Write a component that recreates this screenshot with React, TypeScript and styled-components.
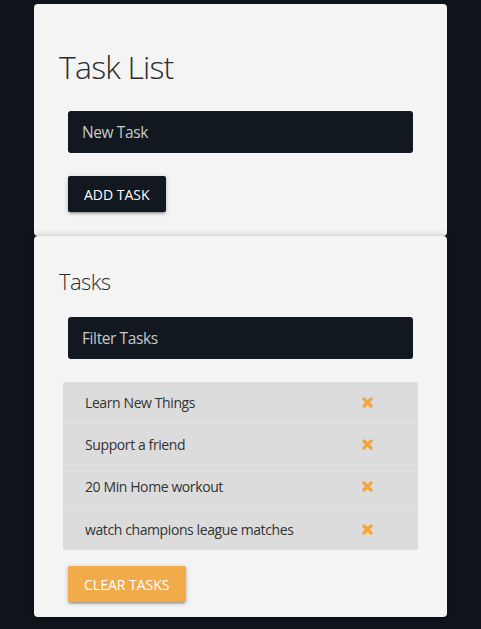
import React from "react";
import styled, { createGlobalStyle } from "styled-components";

const Global = createGlobalStyle`
  html, body { margin: 0; padding: 0; background: #0e141a; }
  body { font-family: "Open Sans", "Noto Sans", sans-serif; color: #333; }
  * { box-sizing: border-box; }
`;

const Page = styled.div`
  min-height: 629px;
  padding: 4px 0 0 34px;
`;

const Column = styled.div`
  width: 413px;
  display: flex;
  flex-direction: column;
`;

const Card = styled.section<{ $top: number; $bottom: number; $raised?: boolean }>`
  background: #f4f4f4;
  border-radius: 4px;
  padding: ${(p) => p.$top}px 0 ${(p) => p.$bottom}px 0;
  position: relative;
  box-shadow: ${(p) =>
    p.$raised ? "0 -2px 6px rgba(0,0,0,0.12), 0 1px 3px rgba(0,0,0,0.2)" : "none"};
  display: flex;
  flex-direction: column;
`;

const Title = styled.h1<{ $size: number; $lh: number; $ls: number }>`
  margin: 0 0 0 25px;
  font-size: ${(p) => p.$size}px;
  line-height: ${(p) => p.$lh}px;
  letter-spacing: ${(p) => p.$ls}px;
  font-weight: 300;
  color: #2b2b2b;
`;

const Field = styled.input<{ $mt: number }>`
  margin: ${(p) => p.$mt}px 34px 0 34px;
  height: 42px;
  border: none;
  border-radius: 3px;
  background: #111820;
  color: #ddd;
  font-family: inherit;
  font-size: 15.5px;
  letter-spacing: -0.4px;
  padding: 0 14px;
  outline: none;
  &::placeholder { color: #c9c9c9; opacity: 1; }
`;

const Button = styled.button<{ $variant: "dark" | "orange"; $mt: number }>`
  align-self: flex-start;
  margin: ${(p) => p.$mt}px 0 0 34px;
  height: 36px;
  padding: 0 16px;
  border: none;
  border-radius: 2px;
  font-family: inherit;
  font-size: 14px;
  text-transform: uppercase;
  color: #fff;
  background: ${(p) => (p.$variant === "dark" ? "#111820" : "#f2ab4b")};
  box-shadow: 0 2px 2px 0 rgba(0,0,0,0.14), 0 3px 1px -2px rgba(0,0,0,0.12), 0 1px 5px 0 rgba(0,0,0,0.2);
  cursor: pointer;
`;

const List = styled.ul`
  list-style: none;
  margin: 23px 29px 0 29px;
  padding: 0;
  background: #dcdcdc;
  border-radius: 2px;
`;

const Item = styled.li`
  height: 42px;
  display: flex;
  align-items: center;
  justify-content: space-between;
  padding: 0 45px 0 22px;
  font-size: 14px;
  letter-spacing: -0.4px;
  color: #333;
  border-bottom: 1px solid #e2e2e2;
  &:last-child { border-bottom: none; }
`;

const Remove = styled.a`
  display: flex;
  width: 11px;
  height: 11px;
  cursor: pointer;
`;

const Cross = () => (
  <svg width="11" height="11" viewBox="0 0 11 11">
    <path d="M2 2 L9 9 M9 2 L2 9" stroke="#f5a43c" strokeWidth="3.2" strokeLinecap="round" />
  </svg>
);

const tasks = [
  "Learn New Things",
  "Support a friend",
  "20 Min Home workout",
  "watch champions league matches",
];

export default function App() {
  return (
    <>
      <Global />
      <Page>
        <Column>
          <Card $top={43} $bottom={24}>
            <Title $size={32} $lh={40} $ls={-0.8}>Task List</Title>
            <Field $mt={24} placeholder="New Task" />
            <Button $variant="dark" $mt={23}>Add Task</Button>
          </Card>
          <Card $top={31} $bottom={15} $raised>
            <Title $size={22} $lh={28} $ls={-0.6}>Tasks</Title>
            <Field $mt={22} placeholder="Filter Tasks" />
            <List>
              {tasks.map((t) => (
                <Item key={t}>
                  <span>{t}</span>
                  <Remove><Cross /></Remove>
                </Item>
              ))}
            </List>
            <Button $variant="orange" $mt={16}>Clear Tasks</Button>
          </Card>
        </Column>
      </Page>
    </>
  );
}
